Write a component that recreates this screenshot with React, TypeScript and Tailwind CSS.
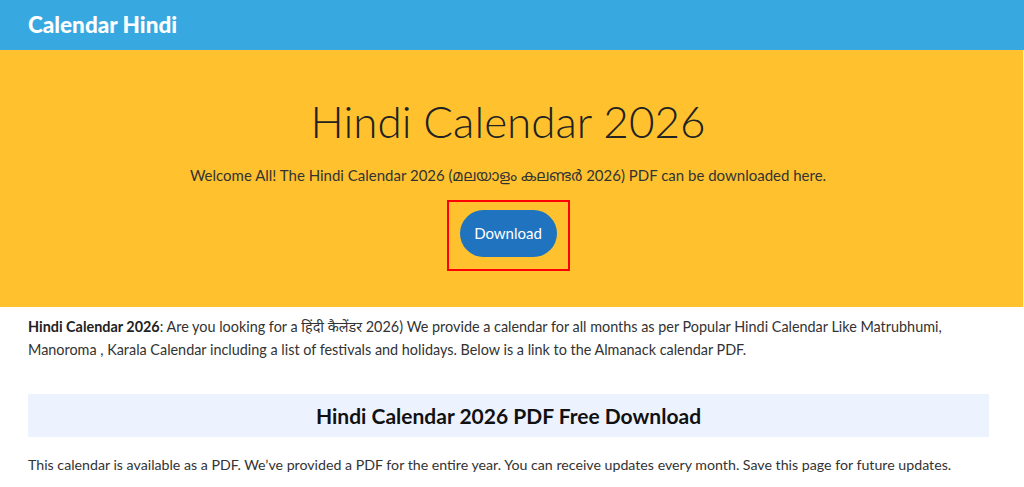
const Header = () => (
  <div className="h-[50px] bg-[#38a9e0] flex items-center pl-[28px]">
    <span className="text-white text-[22.5px] font-black">Calendar Hindi</span>
  </div>
);

const Hero = () => (
  <div className="bg-[#ffc22e] h-[257px] flex flex-col items-center pr-[7px] border-r border-[#fff3cf]">
    <h1 className="mt-[43px] text-[44px] leading-[56px] font-light text-[#222]">Hindi Calendar 2026</h1>
    <p className="mt-[15px] text-[15px] leading-[22px] text-[#333]">
      Welcome All! The Hindi Calendar 2026 (മലയാളം കലണ്ടർ 2026) PDF can be downloaded here.
    </p>
    {/* highlighted download button */}
    <div className="mt-[14px] border-2 border-[#ff0000] w-[123px] h-[71px] flex justify-center pt-[8px]">
      <button className="w-[97px] h-[47px] rounded-full bg-[#1f73bf] text-white text-[15px]">Download</button>
    </div>
  </div>
);

export default function App() {
  return (
    <div className="w-[1024px] h-[487px] overflow-hidden bg-white font-['Lato','Noto_Sans','Noto_Sans_Devanagari','Noto_Sans_Malayalam',sans-serif]">
      <Header />
      <Hero />
      <div className="pl-[28px] pr-[35px]">
        <p className="mt-[8px] text-[14.4px] leading-[23px] text-[#333]">
          <strong className="text-[#222]">Hindi Calendar 2026</strong>: Are you looking for a हिंदी कैलेंडर 2026) We provide a
          calendar for all months as per Popular Hindi Calendar Like Matrubhumi, Manoroma , Karala Calendar including a list
          of festivals and holidays. Below is a link to the Almanack calendar PDF.
        </p>
        <div className="mt-[33px] h-[43px] bg-[#edf3fe] flex items-center justify-center">
          <h2 className="text-[21px] font-bold text-[#111]">Hindi Calendar 2026 PDF Free Download</h2>
        </div>
        <p className="mt-[17px] text-[14.2px] leading-[22px] text-[#333] whitespace-nowrap">
          This calendar is available as a PDF. We’ve provided a PDF for the entire year. You can receive updates every
          month. Save this page for future updates.
        </p>
      </div>
    </div>
  );
}
